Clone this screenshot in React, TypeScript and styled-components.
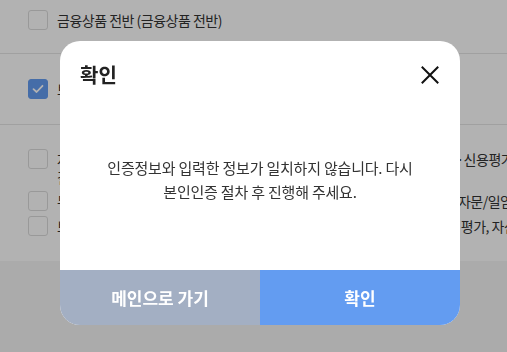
import { FC } from "react";
import styled, { createGlobalStyle } from "styled-components";

const GlobalStyle = createGlobalStyle`
  * {
    box-sizing: border-box;
  }

  body {
    margin: 0;
    font-family: "Noto Sans CJK KR", "Noto Sans", sans-serif;
    color: #333;
    background: #f5f5f5;
  }
`;

const agreeList = [
  {
    text: "자산운용 관련 정보 및 투자자문회사 투자일임업자, 증권회사, 은행 보험사·신용평가사 의사결정에 필요한 정보 제공",
    wrap: true,
  },
  { text: "무료 투자정보 제공 및 전문가 상담 서비스와 로보어드바이저(온라인) 투자자문/일임", wrap: false },
  { text: "보유 자산 진단과 포트폴리오 분석 및 투자성향, 위험선호도 분석 결과 종합 평가, 자산관리 리포트", wrap: false },
];

const App: FC = () => {
  return (
    <>
      <GlobalStyle />
      <Page>
        <Section>
          <Row>
            <CheckBox />
            <Label>금융상품 전반 (금융상품 전반)</Label>
          </Row>
        </Section>
        <Section $tall>
          <Row>
            <CheckBox $checked>
              <svg width="12" height="10" viewBox="0 0 12 10">
                <path d="M1.5 5.2 L4.6 8 L10.5 1.8" fill="none" stroke="#fff" strokeWidth="1.8" strokeLinecap="round" strokeLinejoin="round" />
              </svg>
            </CheckBox>
            <Label>보험상품 가입 및 보장성 보험 관련 정보 (보험)</Label>
          </Row>
        </Section>
        <ListSection>
          {agreeList.map((item) => (
            <Row key={item.text}>
              <CheckBox />
              <Label $wrap={item.wrap}>{item.text}</Label>
            </Row>
          ))}
        </ListSection>
      </Page>

      <Overlay>
        <Modal>
          <Header>
            <Title>확인</Title>
            <CloseButton aria-label="닫기">
              <svg width="24" height="24" viewBox="0 0 24 24">
                <path d="M4.5 4.5 L19.5 19.5 M19.5 4.5 L4.5 19.5" stroke="#111" strokeWidth="2" strokeLinecap="square" />
              </svg>
            </CloseButton>
          </Header>
          <Body>
            인증정보와 입력한 정보가 일치하지 않습니다. 다시
            <br />
            본인인증 절차 후 진행해 주세요.
          </Body>
          <Footer>
            <ActionButton $variant="sub">메인으로 가기</ActionButton>
            <ActionButton $variant="main">확인</ActionButton>
          </Footer>
        </Modal>
      </Overlay>
    </>
  );
};

export default App;

const Page = styled.div`
  width: 100%;
  height: 352px;
  overflow: hidden;
  background: #f5f5f5;
`;

const Section = styled.div<{ $tall?: boolean }>`
  background: #fff;
  padding: ${({ $tall }) => ($tall ? "25px" : "10px")} 28px 0;
  height: ${({ $tall }) => ($tall ? "71px" : "54px")};
  border-bottom: 1px solid #e6e6e6;
`;

const ListSection = styled.div`
  background: #fff;
  padding: 24px 28px 0;
  height: 136px;
  display: flex;
  flex-direction: column;
  gap: 5px;
  overflow: hidden;
`;

const Row = styled.div`
  display: flex;
  align-items: flex-start;
  gap: 9px;
  min-height: 20px;
`;

const CheckBox = styled.span<{ $checked?: boolean }>`
  flex: none;
  width: 20px;
  height: 20px;
  border-radius: 3px;
  display: flex;
  align-items: center;
  justify-content: center;
  border: 1px solid ${({ $checked }) => ($checked ? "#639cf1" : "#dcdcdc")};
  background: ${({ $checked }) => ($checked ? "#639cf1" : "#fff")};
`;

const Label = styled.span<{ $wrap?: boolean }>`
  flex: none;
  width: ${({ $wrap }) => ($wrap ? "500px" : "auto")};
  font-size: 14px;
  line-height: ${({ $wrap }) => ($wrap ? "18px" : "20px")};
  padding-top: ${({ $wrap }) => ($wrap ? "1px" : "0")};
  letter-spacing: -0.5px;
  color: #333;
  white-space: ${({ $wrap }) => ($wrap ? "normal" : "nowrap")};
`;

const Overlay = styled.div`
  position: fixed;
  inset: 0;
  background: rgba(0, 0, 0, 0.3);
  display: flex;
  justify-content: center;
  align-items: flex-start;
  padding: 41px 0 0 13px;
`;

const Modal = styled.div`
  width: 400px;
  height: 284px;
  background: #fff;
  border-radius: 20px;
  overflow: hidden;
  display: flex;
  flex-direction: column;
`;

const Header = styled.div`
  display: flex;
  align-items: center;
  justify-content: space-between;
  padding: 20px 18px 0 20px;
  height: 48px;
`;

const Title = styled.h2`
  margin: 0;
  font-size: 20px;
  line-height: 28px;
  font-weight: 700;
  color: #222;
`;

const CloseButton = styled.button`
  border: 0;
  padding: 0;
  background: none;
  width: 24px;
  height: 24px;
  display: flex;
  cursor: pointer;
`;

const Body = styled.p`
  flex: 1;
  margin: 0;
  display: flex;
  flex-direction: column;
  align-items: center;
  justify-content: center;
  text-align: center;
  font-size: 15px;
  line-height: 24px;
  letter-spacing: -0.2px;
  color: #333;
`;

const Footer = styled.div`
  display: flex;
  height: 55px;
`;

const ActionButton = styled.button<{ $variant: "main" | "sub" }>`
  flex: 1;
  border: 0;
  font-family: inherit;
  font-size: 17px;
  font-weight: 700;
  color: #fff;
  background: ${({ $variant }) => ($variant === "main" ? "#639cf1" : "#a3afc3")};
  cursor: pointer;
`;
